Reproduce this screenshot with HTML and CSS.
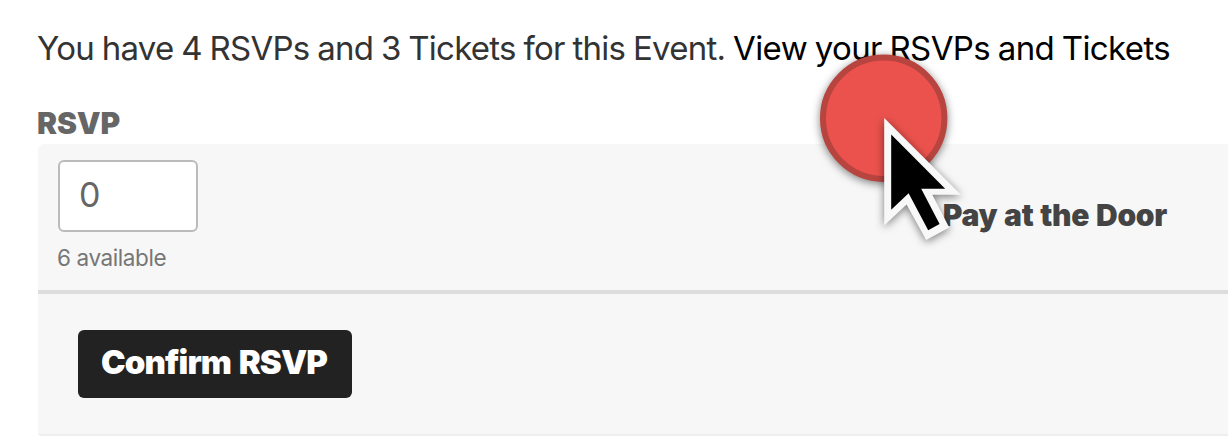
FILE: index.html
```html
<!DOCTYPE html>
<html lang="en">
<head>
    <meta charset="UTF-8">
    <meta name="viewport" content="width=device-width, initial-scale=1.0">
    <title>RSVP</title>
    <link rel="stylesheet" href="styles.css">
</head>
<body>
    <div class="event-tickets">
        <p class="notice"><span class="notice-text">You have 4 RSVPs and 3 Tickets for this Event. </span><a class="notice-link" href="#">View your RSVPs and Tickets</a></p>
        <h2 class="rsvp-title">RSVP</h2>
        <form class="rsvp-form">
            <div class="rsvp-row">
                <div class="quantity">
                    <input class="quantity-input" type="text" value="0" aria-label="Quantity">
                    <span class="available">6 available</span>
                </div>
                <div class="ticket-name">Pay at the Door</div>
            </div>
            <div class="rsvp-footer">
                <button class="confirm" type="button">Confirm RSVP</button>
            </div>
        </form>
    </div>

    <!-- click marker and mouse cursor over the page -->
    <svg class="pointer" width="180" height="220" viewBox="800 40 180 220" aria-hidden="true">
        <circle class="pointer-click" cx="883.7" cy="118.3" r="60.7"/>
        <path class="pointer-edge" d="M884.2 118V225.600L906.600 204.500L926.200 240L949.200 227.600L932.300 194.800H961z"/>
        <path class="pointer-fill" d="M891.200 134.500V209.700L908.600 193.200L928.200 230.200L939.600 224L921.200 188.800H945.200z"/>
    </svg>
</body>
</html>
```

FILE: styles.css
```css
body {
    margin: 0;
    background-color: #fff;
    font-family: Inter, "Liberation Sans", sans-serif;
    color: #333;
    overflow: hidden;
}
.event-tickets {
    padding: 28px 0 0 38px;
}
.notice {
    margin: 0;
    font-size: 33px;
    line-height: 40px;
    white-space: nowrap;
}
.notice-text {
    letter-spacing: -0.72px;
    word-spacing: -0.9px;
    margin-left: -1px;
}
.notice-link {
    color: #000;
    text-decoration: none;
    letter-spacing: -0.6px;
    word-spacing: -1.1px;
}
.rsvp-title {
    margin: 38px 0 0 -1px;
    font-size: 30px;
    font-weight: 900;
    line-height: 34px;
    letter-spacing: -0.1px;
    color: #666;
}
.rsvp-form {
    margin-top: 4px;
    background-color: #f7f7f7;
    border-bottom: 2px solid #eee;
    border-radius: 6px 0 0 4px;
}
.rsvp-row {
    display: flex;
    justify-content: space-between;
    align-items: flex-start;
    box-sizing: border-box;
    height: 150px;
    padding: 16px 61px 0 20px;
    border-bottom: 4px solid #ddd;
}
.quantity {
    display: flex;
    flex-direction: column;
}
.quantity-input {
    box-sizing: border-box;
    width: 140px;
    height: 72px;
    padding: 0 19px 4px;
    border: 2px solid #bbb;
    border-radius: 6px;
    background-color: #fff;
    font-family: inherit;
    font-size: 34px;
    color: #666;
}
.available {
    margin: 12px 0 0 -1px;
    font-size: 22.5px;
    line-height: 28px;
    letter-spacing: -0.4px;
    color: #767676;
}
.ticket-name {
    margin-top: 37px;
    font-size: 30px;
    font-weight: 900;
    line-height: 36px;
    letter-spacing: -0.3px;
    word-spacing: 1.2px;
    color: #444;
}
.rsvp-footer {
    box-sizing: border-box;
    height: 140px;
    padding: 36px 40px;
}
.confirm {
    width: 274px;
    height: 68px;
    padding: 0 2px 4px 0;
    border: 0;
    border-radius: 6px;
    background-color: #222;
    font-family: inherit;
    font-size: 33px;
    font-weight: 900;
    letter-spacing: -0.9px;
    word-spacing: 2px;
    color: #fff;
    white-space: nowrap;
}
.pointer {
    position: absolute;
    left: 800px;
    top: 40px;
}
.pointer-click {
    fill: #eb524d;
    stroke: #b8443f;
    stroke-width: 6;
    filter: drop-shadow(0 2px 4px rgba(0, 0, 0, 0.5));
}
.pointer-edge {
    fill: #f8f8f8;
    filter: drop-shadow(0 2px 4px rgba(0, 0, 0, 0.5));
}
.pointer-fill {
    fill: #000;
}
```
